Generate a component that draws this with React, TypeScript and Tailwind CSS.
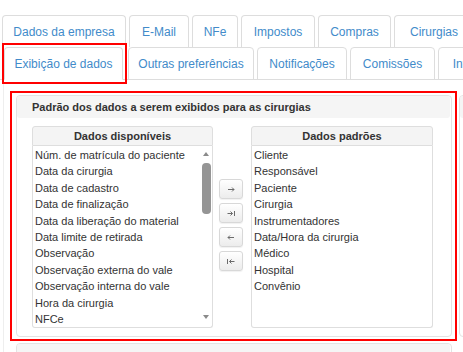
import React from 'react';

const topTabs = [
  { label: 'Dados da empresa', w: 'w-[124px]' },
  { label: 'E-Mail', w: 'w-[60px]' },
  { label: 'NFe', w: 'w-[46px]' },
  { label: 'Impostos', w: 'w-[74px]' },
  { label: 'Compras', w: 'w-[73px]' },
  { label: 'Cirurgias', w: 'w-[80px]' },
];

const bottomTabs = [
  { label: 'Outras preferências', w: 'w-[126px]' },
  { label: 'Notificações', w: 'w-[90px]' },
  { label: 'Comissões', w: 'w-[85px]' },
  { label: 'Integrações', w: 'w-[92px]' },
];

const available = [
  'Núm. de matrícula do paciente',
  'Data da cirurgia',
  'Data de cadastro',
  'Data de finalização',
  'Data da liberação do material',
  'Data limite de retirada',
  'Observação',
  'Observação externa do vale',
  'Observação interna do vale',
  'Hora da cirurgia',
  'NFCe',
];

const defaults = [
  'Cliente',
  'Responsável',
  'Paciente',
  'Cirurgia',
  'Instrumentadores',
  'Data/Hora da cirurgia',
  'Médico',
  'Hospital',
  'Convênio',
];

const icons = [
  'M1 3.5h6 M5 1.5l2 2-2 2',
  'M0.5 3.5h5 M3.5 1.5l2 2-2 2 M7.5 1v5',
  'M1 3.5h6 M3 1.5l-2 2 2 2',
  'M0.5 1v5 M2.5 3.5h5 M4.5 1.5l-2 2 2 2',
];

function ListBox({ title, items, w, scroll }: { title: string; items: string[]; w: string; scroll?: boolean }) {
  return (
    <div className={`${w} shrink-0`}>
      <div className="h-[20px] border border-[#dedede] bg-[#f4f4f4] rounded-t-[3px] flex items-center justify-center font-bold text-[11px] text-[#333]">
        {title}
      </div>
      <div className="h-[182px] border-x border-b border-[#dedede] rounded-b-[3px] bg-white flex">
        <div className="flex-1 pl-[2px] pt-px text-[11px] leading-[16.4px] text-[#333] whitespace-nowrap overflow-hidden">
          {items.map((it) => (
            <div key={it}>{it}</div>
          ))}
        </div>
        {scroll && (
          <div className="w-[12px] flex flex-col items-center pt-[6px] pb-[8px]">
            <div className="w-0 h-0 border-x-[3.5px] border-x-transparent border-b-[4px] border-b-[#8a8a8a]" />
            <div className="mt-[7px] w-[9px] h-[51px] rounded-[4px] bg-[#959595]" />
            <div className="flex-1" />
            <div className="w-0 h-0 border-x-[3.5px] border-x-transparent border-t-[4px] border-t-[#8a8a8a]" />
          </div>
        )}
      </div>
    </div>
  );
}

export default function App() {
  return (
    <div className="w-[463px] h-[352px] overflow-hidden bg-white pt-[15px] font-['Liberation_Sans',Arial,sans-serif]">
      <div className="flex gap-[3px] pl-[2px]">
        {topTabs.map((t) => (
          <div
            key={t.label}
            className={`${t.w} h-[32px] shrink-0 flex items-center justify-center rounded-t-[4px] border border-b-0 border-[#ddd] text-[12px] text-[#428bca] whitespace-nowrap`}
          >
            {t.label}
          </div>
        ))}
      </div>
      <div className="flex gap-[3px] pl-[4px] border-b border-[#ddd]">
        <div className="relative w-[119px] h-[33px] -mb-px mr-[2px] shrink-0 flex items-center justify-center rounded-t-[4px] border border-[#ddd] border-b-white bg-white text-[12px] text-[#428bca] whitespace-nowrap">
          Exibição de dados
          <span className="absolute left-[-3px] top-[-5px] right-[-5px] bottom-[-5px] border-2 border-[#f00]" />
        </div>
        {bottomTabs.map((t) => (
          <div
            key={t.label}
            className={`${t.w} h-[33px] -mb-px shrink-0 flex items-center justify-center rounded-t-[4px] border border-[#ddd] text-[12px] text-[#428bca] whitespace-nowrap`}
          >
            {t.label}
          </div>
        ))}
      </div>

      <div className="ml-[3px] border-l border-[#eee] pl-[12px] pt-[15px] flex gap-[7px]">
        <div className="w-[436px] shrink-0 flex flex-col gap-[6px]">
          <div className="relative shrink-0 h-[242px] border border-[#e3e3e3] rounded-[4px] bg-white">
            <div className="h-[22px] mr-px bg-[#f5f5f5] rounded-[3px] pl-[15px] flex items-center font-bold text-[11px] text-[#333]">
              Padrão dos dados a serem exibidos para as cirurgias
            </div>
            <div className="flex pl-[15px] pt-[8px]">
              <ListBox title="Dados disponíveis" items={available} w="w-[181px]" scroll />
              <div className="ml-[6px] mt-[53px] w-[24px] flex flex-col gap-[4px]">
                {icons.map((d) => (
                  <div
                    key={d}
                    className="h-[20px] rounded-[3px] border border-[#d8d8d8] bg-gradient-to-b from-white to-[#ececec] shadow-[0_1px_1px_rgba(0,0,0,0.06)] flex items-center justify-center"
                  >
                    <svg width="8" height="7" viewBox="0 0 8 7" fill="none" stroke="#6b6b6b" strokeWidth="1">
                      <path d={d} />
                    </svg>
                  </div>
                ))}
              </div>
              <div className="ml-[8px]">
                <ListBox title="Dados padrões" items={defaults} w="w-[182px]" />
              </div>
            </div>
            <span className="absolute left-[-7px] top-[-5px] right-[-6px] bottom-[-5px] border-2 border-[#f00]" />
          </div>
          <div className="shrink-0 h-[60px] border border-[#e3e3e3] rounded-[4px]">
            <div className="h-[22px] mr-px bg-[#f5f5f5] rounded-[3px] pl-[15px] pt-[7px] font-bold text-[11px] leading-[13px] text-[#333]">
              Padrão dos dados a serem exibidos para os vales
            </div>
          </div>
        </div>
        <div className="w-[436px] shrink-0">
          <div className="h-[242px] border border-[#e3e3e3] rounded-[4px]">
            <div className="h-[22px] mr-px bg-[#f5f5f5] rounded-[3px]" />
          </div>
        </div>
      </div>
    </div>
  );
}
